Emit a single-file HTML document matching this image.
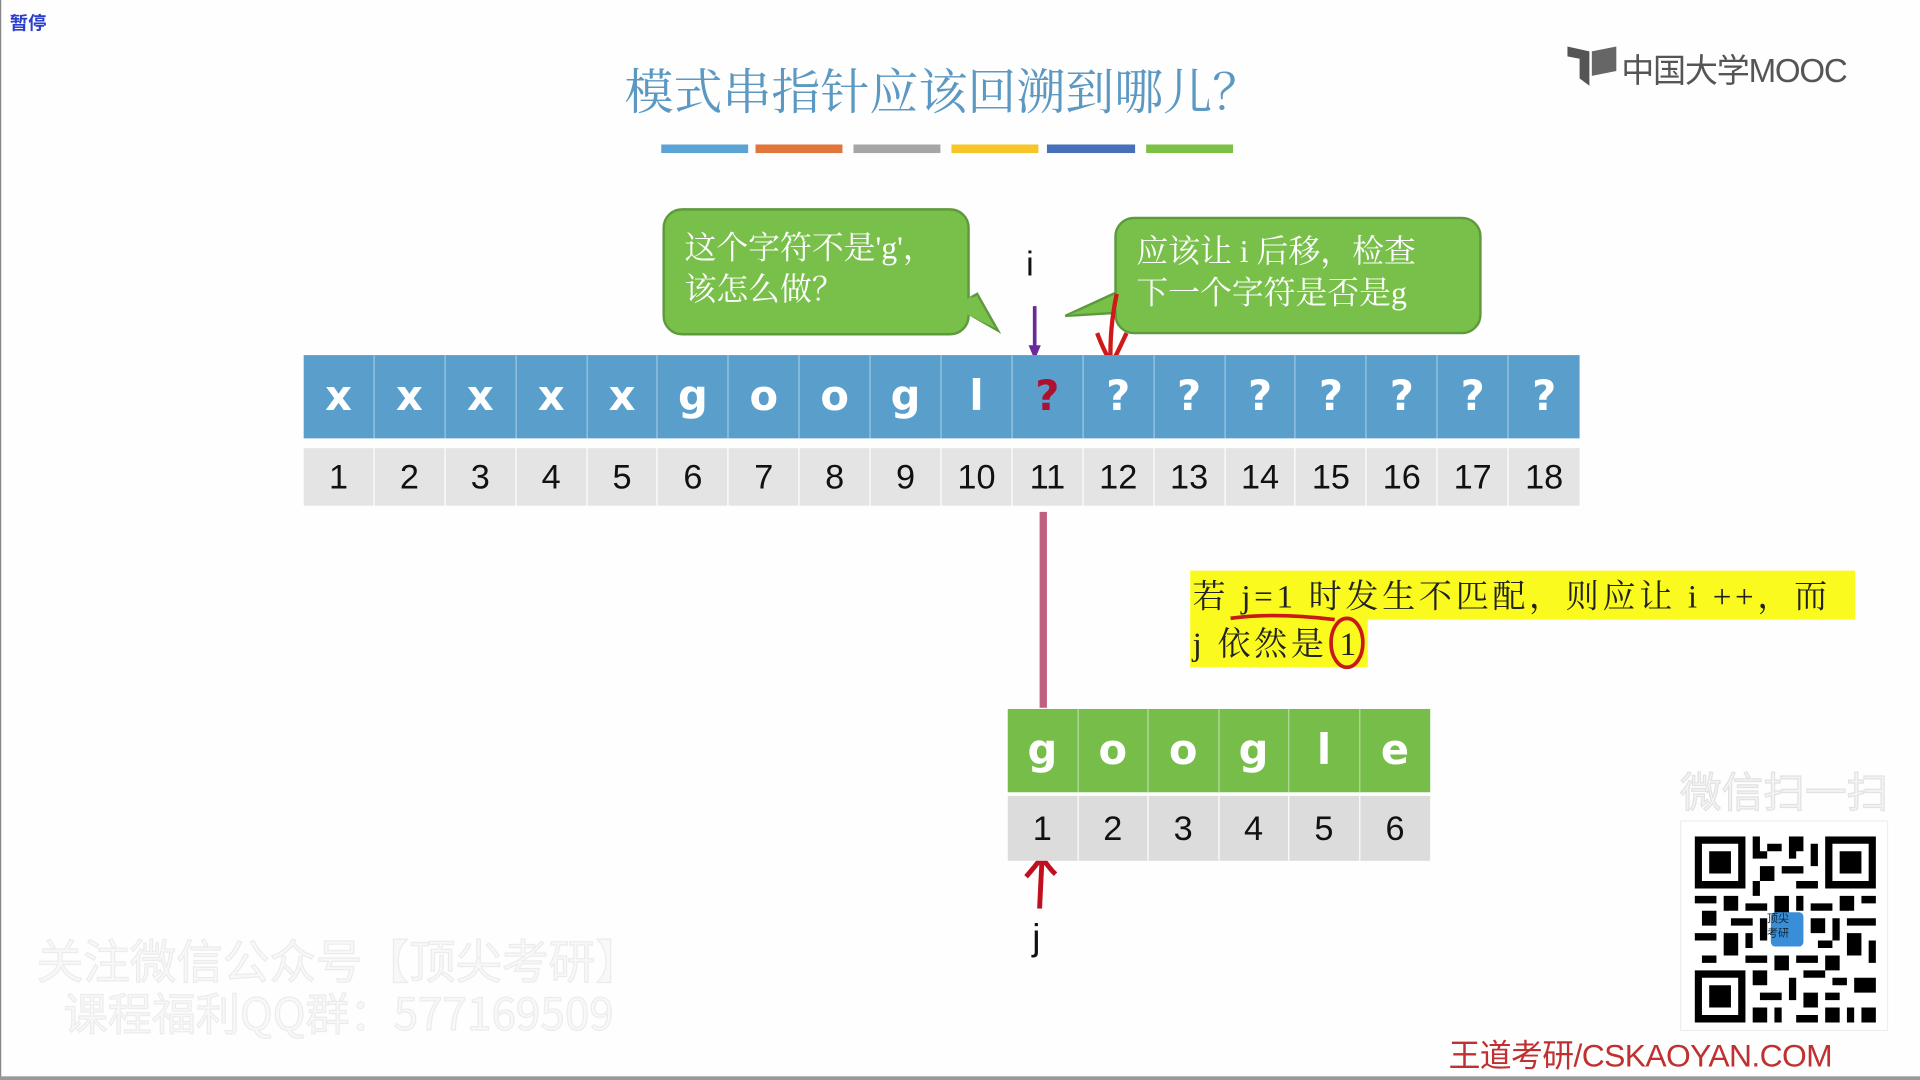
<!DOCTYPE html>
<html><head><meta charset="utf-8"><style>
*{margin:0;padding:0;box-sizing:border-box}
html,body{width:1920px;height:1080px;overflow:hidden;background:#fff}
#s{position:absolute;left:0;top:0;width:1568px;height:882px;transform:scale(1.22449);transform-origin:0 0;background:#fefefe;font-family:"Liberation Sans","Noto Sans CJK SC",sans-serif}
.a{position:absolute}
.row{position:absolute;display:flex}
.cb{width:57.9px;height:68px;background:#5a9fcb;border-right:1.5px solid #9cc6e2;color:#fff;font-size:34px;font-weight:bold;display:flex;align-items:center;justify-content:center;font-family:"DejaVu Sans",sans-serif}
.cn{width:57.9px;height:47px;background:#e4e4e4;border-right:1.5px solid #fff;color:#111;font-size:28px;display:flex;align-items:center;justify-content:center}
.cg{width:57.5px;height:68px;background:#77bd4a;border-right:1.5px solid #b8dca0;color:#fff;font-size:34px;font-weight:bold;display:flex;align-items:center;justify-content:center;font-family:"DejaVu Sans",sans-serif}
.cn2{width:57.5px;height:53px;background:#dcdcdc;border-right:1.5px solid #fff;color:#111;font-size:28px;display:flex;align-items:center;justify-content:center}
.bub{position:absolute;background:#78c04a;border:2px solid #5e9a3c;border-radius:16px;color:#fff;font-family:"Liberation Serif","Noto Serif CJK SC",serif;font-size:26px;line-height:34px;padding:14px 16px}
</style></head><body><div id="s">
<div class="a" style="left:0;top:0;width:1px;height:882px;background:#888"></div>
<div class="a" style="left:0;top:879px;width:1568px;height:3px;background:#999"></div>
<div class="a" style="left:8px;top:8px;color:#2a3fd0;font-size:15px;font-weight:bold;font-family:'Noto Sans CJK SC',sans-serif">暂停</div>
<div class="a" style="left:1280px;top:36px;width:42px;height:34px">
<svg width="42" height="34"><path d="M0 2 L18 6 L18 34 L10 28 L10 12 L0 10Z" fill="#555"/><path d="M20 6 L40 2 L40 22 L20 26Z" fill="#666"/></svg></div>
<div class="a" style="left:1324px;top:36px;color:#555;font-size:27px;letter-spacing:-1px;font-family:'Liberation Sans','Noto Sans CJK SC',sans-serif">中国大学MOOC</div>
<div class="a" style="left:0;top:44px;width:1540px;text-align:center;color:#5b98c2;font-size:40px;font-family:'Liberation Serif','Noto Serif CJK SC',serif">模式串指针应该回溯到哪儿？</div>
<div class="a" style="left:540px;top:118px;width:71px;height:7px;background:#5ba3d4"></div>
<div class="a" style="left:617px;top:118px;width:71px;height:7px;background:#e0763c"></div>
<div class="a" style="left:697px;top:118px;width:71px;height:7px;background:#a6a6a6"></div>
<div class="a" style="left:777px;top:118px;width:71px;height:7px;background:#f5c52a"></div>
<div class="a" style="left:855px;top:118px;width:72px;height:7px;background:#4870b8"></div>
<div class="a" style="left:936px;top:118px;width:71px;height:7px;background:#7cc145"></div>
<svg class="a" style="left:0;top:0" width="1568" height="882">
<path d="M780 250 L815 270 L798 240Z" fill="#78c04a" stroke="#5e9a3c" stroke-width="2"/>
<path d="M920 235 L870 258 L920 255Z" fill="#78c04a" stroke="#5e9a3c" stroke-width="2"/>
</svg>
<div class="bub" style="left:541px;top:170px;width:251px;height:104px">这个字符不是'g'，<br>该怎么做？</div>
<div class="bub" style="left:910px;top:177px;width:300px;height:96px;padding-top:10px">应该让 i 后移，检查<br>下一个字符是否是g</div>
<svg class="a" style="left:0;top:0" width="1568" height="882">
<path d="M780 252 L813 268 L793 242Z" fill="#78c04a"/>
<path d="M922 238 L873 257 L922 252Z" fill="#78c04a"/>
<line x1="845" y1="250" x2="845" y2="286" stroke="#6a2a9a" stroke-width="3"/>
<path d="M840 282 L845 294 L850 282Z" fill="#6a2a9a"/>
<path d="M912 240 Q906 268 907 296 M896 272 Q902 288 908 297 Q914 285 920 272" stroke="#d01818" stroke-width="3.5" fill="none"/>
<line x1="852" y1="418" x2="852" y2="578" stroke="#c0607e" stroke-width="6"/>
<path d="M849 742 Q850 720 851 702 M838 716 Q845 708 851 700 Q856 708 862 714" stroke="#c01020" stroke-width="4" fill="none"/>
</svg>
<div class="a" style="left:838px;top:200px;font-size:28px;color:#111">i</div>
<div class="row" style="left:248px;top:290px">
<div class="cb">x</div><div class="cb">x</div><div class="cb">x</div><div class="cb">x</div><div class="cb">x</div><div class="cb">g</div><div class="cb">o</div><div class="cb">o</div><div class="cb">g</div><div class="cb">l</div><div class="cb" style="color:#b01030">?</div><div class="cb">?</div><div class="cb">?</div><div class="cb">?</div><div class="cb">?</div><div class="cb">?</div><div class="cb">?</div><div class="cb" style="border:0">?</div></div>
<div class="row" style="left:248px;top:366px">
<div class="cn">1</div><div class="cn">2</div><div class="cn">3</div><div class="cn">4</div><div class="cn">5</div><div class="cn">6</div><div class="cn">7</div><div class="cn">8</div><div class="cn">9</div><div class="cn">10</div><div class="cn">11</div><div class="cn">12</div><div class="cn">13</div><div class="cn">14</div><div class="cn">15</div><div class="cn">16</div><div class="cn">17</div><div class="cn" style="border:0">18</div></div>
<div class="a" style="left:972px;top:466px;width:543px;height:40px;background:#fafa1e"></div>
<div class="a" style="left:972px;top:505px;width:145px;height:40px;background:#fafa1e"></div>
<div class="a" style="left:974px;top:468px;font-size:27px;line-height:39px;color:#222;letter-spacing:3px;font-family:'Liberation Serif','Noto Serif CJK SC',serif;width:560px;white-space:nowrap">若 j=1 时发生不匹配，则应让 i ++，而<br>j 依然是 1</div>
<svg class="a" style="left:0;top:0" width="1568" height="882">
<path d="M1005 505 Q1040 500 1090 506" stroke="#c81818" stroke-width="3" fill="none"/>
<ellipse cx="1100" cy="525" rx="13" ry="20" stroke="#c81818" stroke-width="3" fill="none"/>
</svg>
<div class="row" style="left:823px;top:579px">
<div class="cg">g</div><div class="cg">o</div><div class="cg">o</div><div class="cg">g</div><div class="cg">l</div><div class="cg" style="border:0">e</div></div>
<div class="row" style="left:823px;top:650px">
<div class="cn2">1</div><div class="cn2">2</div><div class="cn2">3</div><div class="cn2">4</div><div class="cn2">5</div><div class="cn2" style="border:0">6</div></div>
<div class="a" style="left:843px;top:750px;font-size:30px;color:#111">j</div>
<div class="a" style="left:30px;top:755px;font-size:38px;color:#f8f8f8;font-family:'Noto Sans CJK SC',sans-serif;-webkit-text-stroke:1px #ececec">关注微信公众号【顶尖考研】</div>
<div class="a" style="left:52px;top:800px;font-size:36px;color:#f8f8f8;font-family:'Noto Sans CJK SC',sans-serif;-webkit-text-stroke:1px #ececec">课程福利QQ群：577169509</div>
<div class="a" style="left:1372px;top:620px;font-size:34px;color:#f4f4f4;font-family:'Noto Sans CJK SC',sans-serif;-webkit-text-stroke:1px #e2e2e2">微信扫一扫</div>
<div class="a" style="left:1372px;top:670px;width:170px;height:172px;border:1px solid #eee;background:#fff"></div>
<svg class="a" style="left:1384px;top:683px" width="148" height="152" viewBox="0 0 25 25" preserveAspectRatio="none">
<g fill="#000">
<path d="M0 0h7v7h-7zM1 1v5h5v-5zM2 2h3v3h-3z" fill-rule="evenodd"/>
<path d="M18 0h7v7h-7zM19 1v5h5v-5zM20 2h3v3h-3z" fill-rule="evenodd"/>
<path d="M0 18h7v7h-7zM1 19v5h5v-5zM2 20h3v3h-3z" fill-rule="evenodd"/>
<path d="M8 0h1v2h1v1h-2zM10 1h2v1h-2zM13 0h2v2h-1v1h-1zM16 1h1v3h-1zM9 4h2v2h-2zM12 4h3v1h-3zM8 6h1v2h-1zM14 6h3v1h-3zM0 8h3v1h-3zM4 8h2v2h-2zM7 9h3v1h-3zM11 8h2v3h-2zM14 8h1v2h-1zM16 9h3v1h-3zM20 8h2v2h-2zM23 8h2v1h-2zM1 10h2v2h-2zM5 11h3v1h-3zM9 11h1v3h-1zM16 11h2v2h-2zM19 11h1v3h-1zM21 11h4v1h-4zM0 13h3v1h-3zM4 13h2v3h-2zM7 13h1v2h-1zM17 14h2v1h-2zM21 13h2v3h-2zM24 14h1v3h-1zM1 16h2v1h-2zM7 16h3v1h-3zM11 16h2v2h-2zM14 16h3v1h-3zM18 16h2v2h-2zM8 18h2v2h-2zM13 19h1v3h-1zM15 18h3v1h-3zM19 19h2v1h-2zM22 19h3v2h-3zM9 21h3v1h-3zM15 21h2v2h-2zM18 21h2v1h-2zM8 23h2v2h-2zM11 23h1v2h-1zM14 24h3v1h-3zM18 23h2v2h-2zM21 23h1v2h-1zM23 23h2v2h-2z"/>
</g>
<rect x="10.5" y="10.2" width="4.5" height="4.6" rx="0.6" fill="#3a8ed8"/>
</svg>
<div class="a" style="left:1443px;top:744px;font-size:9px;line-height:12px;color:#123;font-family:'Noto Sans CJK SC',sans-serif">顶尖<br>考研</div>
<div class="a" style="left:1183px;top:842px;font-size:26px;color:#c03030;letter-spacing:-0.5px;font-family:'Liberation Sans','Noto Sans CJK SC',sans-serif">王道考研/CSKAOYAN.COM</div>
</div></body></html>
